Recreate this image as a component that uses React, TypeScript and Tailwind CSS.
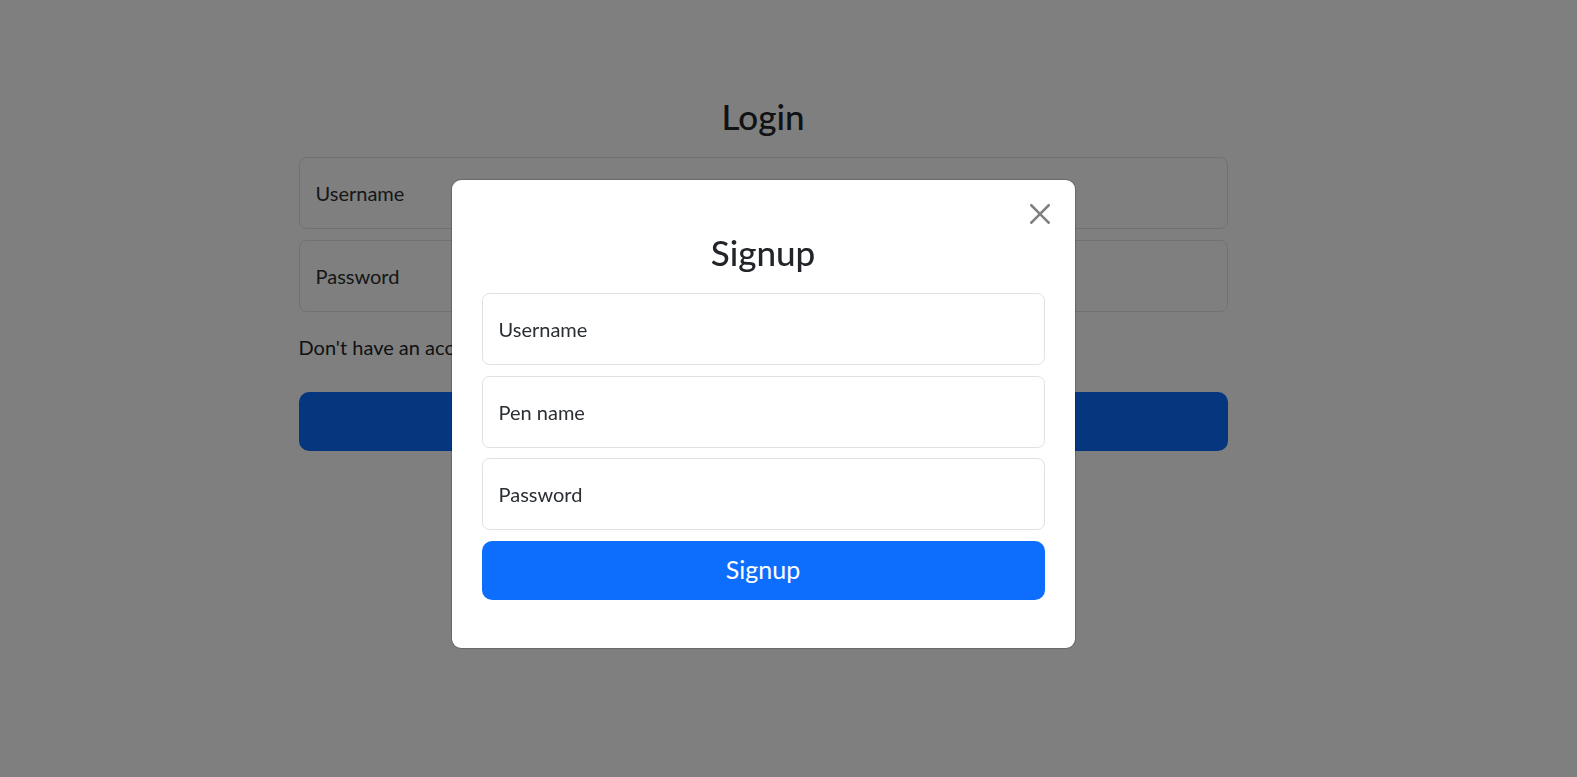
import { useState } from 'react';

function CloseIcon() {
  return (
    <svg viewBox="0 0 16 16" className="w-5 h-5" fill="#000" fillOpacity={0.5}>
      <path d="M.293.293a1 1 0 0 1 1.414 0L8 6.586 14.293.293a1 1 0 1 1 1.414 1.414L9.414 8l6.293 6.293a1 1 0 0 1-1.414 1.414L8 9.414l-6.293 6.293a1 1 0 0 1-1.414-1.414L6.586 8 .293 1.707a1 1 0 0 1 0-1.414z" />
    </svg>
  );
}

function Field({ placeholder, type = 'text' }: { placeholder: string; type?: string }) {
  return (
    <input
      type={type}
      placeholder={placeholder}
      className="w-full h-[72px] px-[16px] text-[20px] text-[#212529] placeholder:text-[#2b2f33] bg-white border border-[#dee2e6] rounded-[7.5px] outline-none"
    />
  );
}

export default function App() {
  const [open, setOpen] = useState(true);

  return (
    <div className="min-h-screen bg-white font-['Lato','Segoe_UI',sans-serif] text-[#212529]">
      {/* Login */}
      <div className="pr-[51px] pt-[95px]">
        <div className="mx-auto w-[929px]">
          <h2 className="text-center text-[35px] leading-[42px] font-medium mb-[20px]">Login</h2>
          <div className="flex flex-col gap-[11px]">
            <Field placeholder="Username" />
            <Field placeholder="Password" type="password" />
          </div>
          <p className="mt-[20px] text-[20px] leading-[30px]">
            Don't have an account?{' '}
            <button onClick={() => setOpen(true)} className="text-[#0d6efd] underline">
              Signup
            </button>
          </p>
          <button className="mt-[30px] w-full h-[59px] rounded-[10px] bg-[#0d6efd] text-white text-[25px]">
            Login
          </button>
        </div>
      </div>

      {open && (
        <>
          {/* Backdrop */}
          <div className="fixed inset-0 bg-black/50" />
          {/* Modal */}
          <div className="fixed inset-0 pr-[51px] pt-[179px]">
            <div className="mx-auto w-[625px] bg-white bg-clip-padding border border-black/[0.175] rounded-[10px] px-[30px] pt-[24px] pb-[48.5px]">
              <div className="flex justify-end h-5">
                <button onClick={() => setOpen(false)} className="-mr-[5px]">
                  <CloseIcon />
                </button>
              </div>
              <h2 className="mt-[7px] mb-[20px] text-center text-[35px] leading-[42px] font-medium">Signup</h2>
              <div className="flex flex-col gap-[10.5px]">
                <Field placeholder="Username" />
                <Field placeholder="Pen name" />
                <Field placeholder="Password" type="password" />
                <button className="w-full h-[59px] rounded-[10px] bg-[#0d6efd] text-white text-[25px]">
                  Signup
                </button>
              </div>
            </div>
          </div>
        </>
      )}
    </div>
  );
}
